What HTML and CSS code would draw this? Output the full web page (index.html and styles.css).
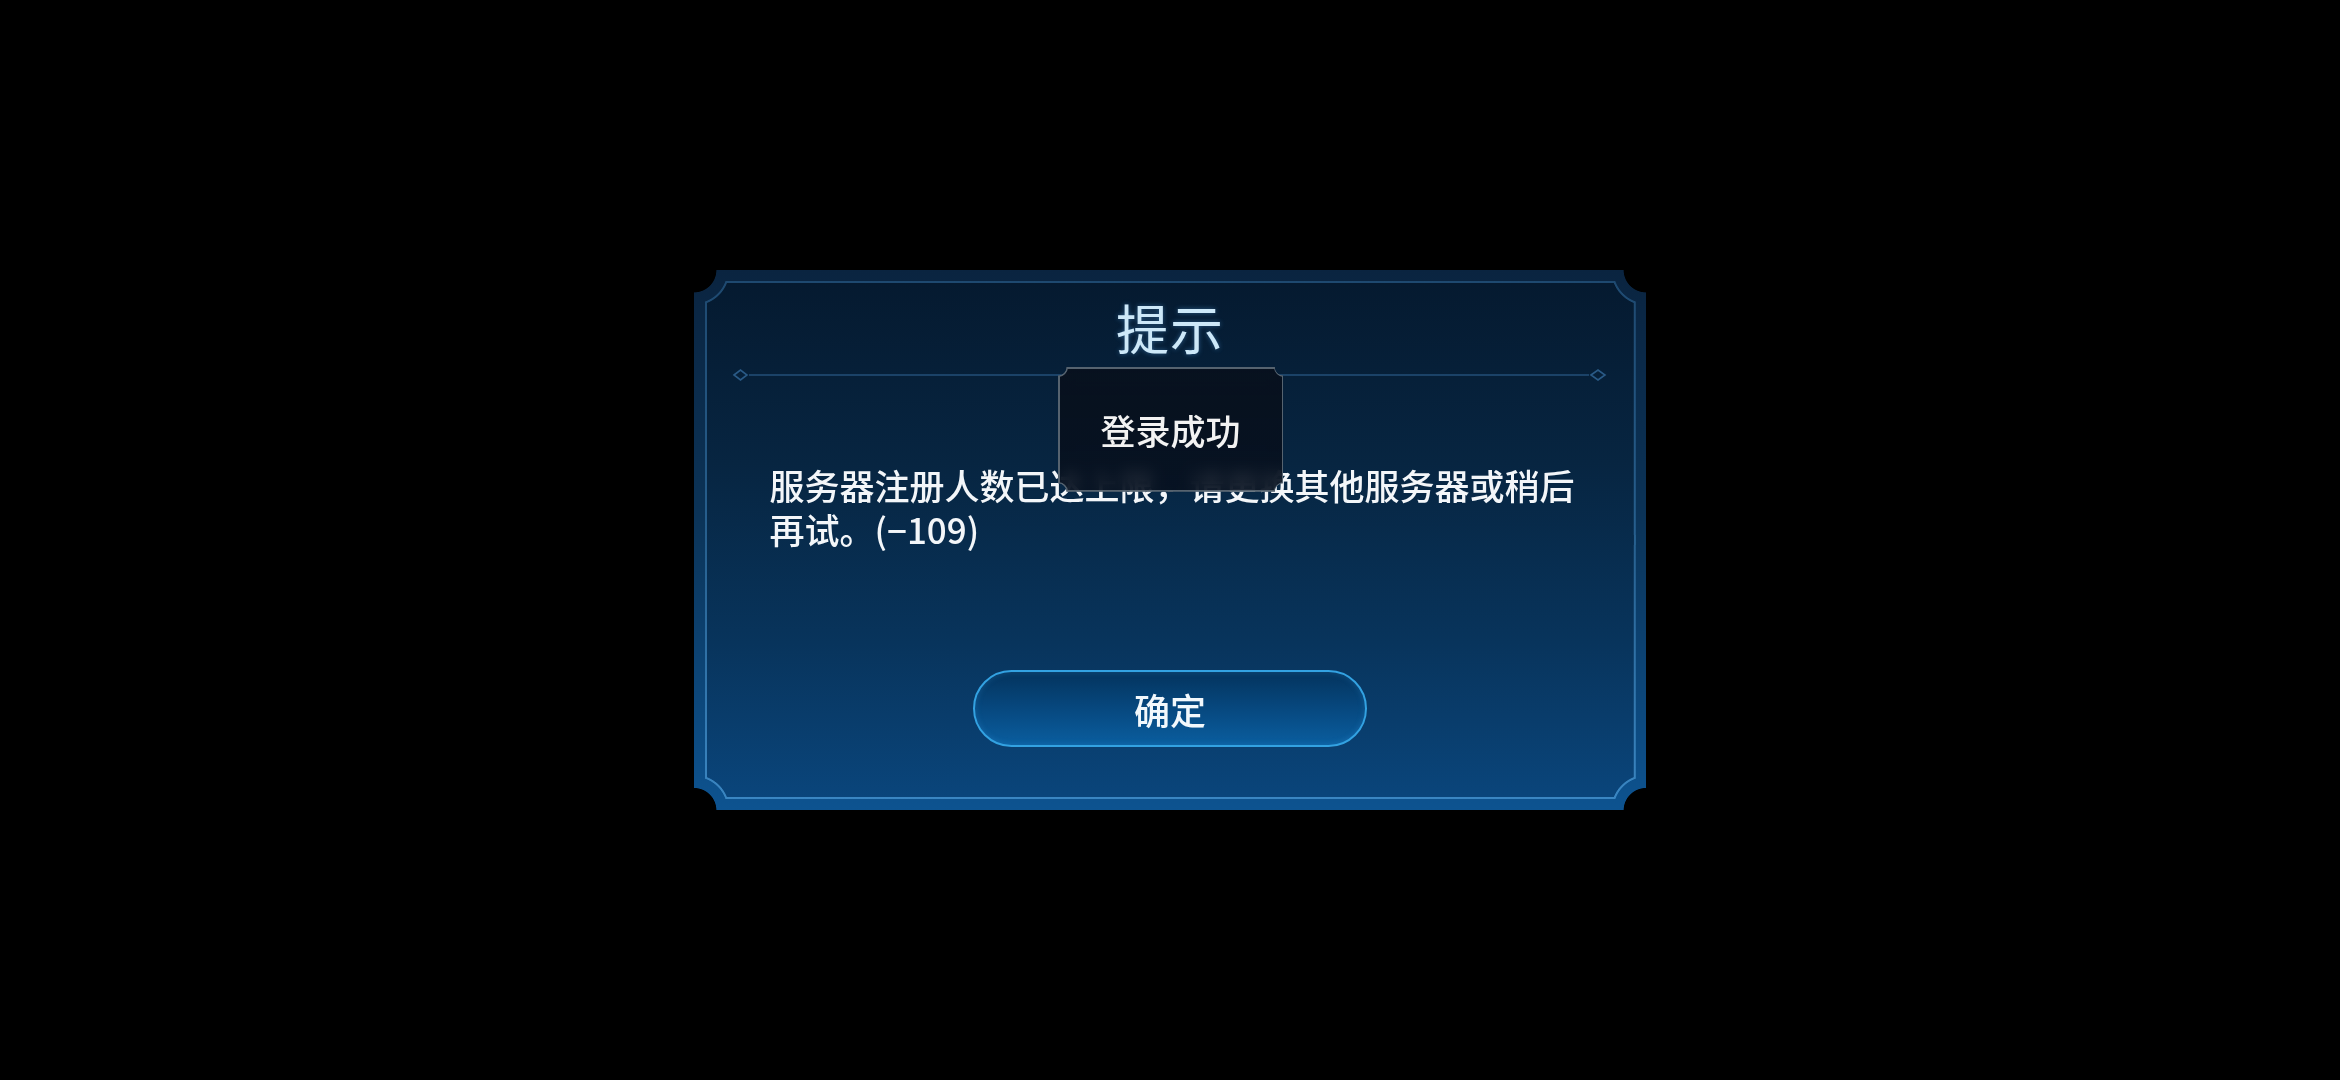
FILE: index.html
```html
<!DOCTYPE html>
<html lang="zh-CN">
<head>
<meta charset="utf-8">
<title>提示</title>
<link rel="stylesheet" href="styles.css">
</head>
<body>
<div class="stage">
  <div class="dialog notched band">
    <div class="frame-line notched">
      <div class="panel notched">
        <div class="title">提示</div>
        <svg class="divider" width="876" height="14" viewBox="0 0 876 14">
          <path d="M2 7 L8.5 2 L15 7 L8.5 12 Z" fill="none" stroke="#2a5a86" stroke-width="1.6"/>
          <line x1="17" y1="7" x2="857" y2="7" stroke="#234f78" stroke-width="1.6"/>
          <path d="M859 7 L866 2 L873 7 L866 12 Z" fill="none" stroke="#2a5a86" stroke-width="1.6"/>
        </svg>
        <p class="message">服务器注册人数已达上限，请更换其他服务器或稍后再试。(−109)</p>
        <button class="confirm" type="button">确定</button>
      </div>
    </div>
    <div class="toast">
      <svg class="toast-edge" width="226" height="125" viewBox="0 0 226 125">
        <path d="M9 1 H217 A9 9 0 0 0 225 9 V116 A9 9 0 0 0 217 124 H9 A9 9 0 0 0 1 116 V9 A9 9 0 0 0 9 1 Z" fill="none" stroke="#56636f" stroke-width="2"/>
      </svg>
      <span class="toast-text">登录成功</span>
    </div>
  </div>
</div>
</body>
</html>
```
FILE: styles.css
```css
* { box-sizing: border-box; }

html, body {
  margin: 0;
  padding: 0;
  background: #000;
}

body {
  font-family: "Noto Sans CJK SC", "Noto Sans", sans-serif;
}

.stage {
  width: 2340px;
  height: 1080px;
  display: flex;
  align-items: center;
  justify-content: center;
}

.notched {
  --o: 0px;
  --r: 22px;
  -webkit-mask:
    radial-gradient(circle at calc(-1 * var(--o)) calc(-1 * var(--o)), transparent var(--r), #000 calc(var(--r) + 0.8px)) top left / 51% 51% no-repeat,
    radial-gradient(circle at calc(100% + var(--o)) calc(-1 * var(--o)), transparent var(--r), #000 calc(var(--r) + 0.8px)) top right / 51% 51% no-repeat,
    radial-gradient(circle at calc(-1 * var(--o)) calc(100% + var(--o)), transparent var(--r), #000 calc(var(--r) + 0.8px)) bottom left / 51% 51% no-repeat,
    radial-gradient(circle at calc(100% + var(--o)) calc(100% + var(--o)), transparent var(--r), #000 calc(var(--r) + 0.8px)) bottom right / 51% 51% no-repeat;
  mask:
    radial-gradient(circle at calc(-1 * var(--o)) calc(-1 * var(--o)), transparent var(--r), #000 calc(var(--r) + 0.8px)) top left / 51% 51% no-repeat,
    radial-gradient(circle at calc(100% + var(--o)) calc(-1 * var(--o)), transparent var(--r), #000 calc(var(--r) + 0.8px)) top right / 51% 51% no-repeat,
    radial-gradient(circle at calc(-1 * var(--o)) calc(100% + var(--o)), transparent var(--r), #000 calc(var(--r) + 0.8px)) bottom left / 51% 51% no-repeat,
    radial-gradient(circle at calc(100% + var(--o)) calc(100% + var(--o)), transparent var(--r), #000 calc(var(--r) + 0.8px)) bottom right / 51% 51% no-repeat;
}

.dialog {
  position: relative;
  width: 953px;
  height: 540px;
  padding: 11px;
  --o: 0px;
  --r: 22px;
  background: linear-gradient(180deg, #0a2440 0%, #0b3357 45%, #0d5390 100%);
}

.frame-line {
  height: 100%;
  padding: 2px;
  --o: 11px;
  --r: 33px;
  background: linear-gradient(180deg, #1e4970 0%, #27608f 50%, #3a86c2 100%);
}

.panel {
  height: 100%;
  --o: 13px;
  --r: 35px;
  background: linear-gradient(180deg, #051a30 0%, #072541 35%, #08345c 70%, #0a457b 100%);
  display: flex;
  flex-direction: column;
  align-items: center;
}

.title {
  margin-top: 14px;
  height: 60px;
  line-height: 60px;
  font-size: 53px;
  font-weight: 400;
  color: #cde8f8;
  text-shadow: 0 0 5px rgba(90, 170, 240, 0.45);
  letter-spacing: 1px;
}

.divider {
  display: block;
  margin-top: 11px;
  flex: none;
}

.message {
  align-self: flex-start;
  margin: 81px 0 0 63px;
  width: 820px;
  font-size: 35px;
  line-height: 44px;
  font-weight: 500;
  color: #f3f6f9;
}

.confirm {
  margin-top: 119px;
  width: 394px;
  height: 77px;
  border-radius: 39px;
  border: 2px solid #33a2e2;
  background: linear-gradient(180deg, #04345e 0%, #074a82 55%, #0a5e9f 100%);
  box-shadow: inset 0 0 6px rgba(60, 160, 230, 0.25);
  color: #f2f8fc;
  font-family: "Noto Sans CJK SC", "Noto Sans", sans-serif;
  font-size: 36px;
  font-weight: 500;
  line-height: 1;
  padding: 0;
}

.toast {
  position: absolute;
  left: 364px;
  top: 97px;
  width: 226px;
  height: 125px;
  display: flex;
  align-items: center;
  justify-content: center;
  background: linear-gradient(180deg, rgba(8, 16, 28, 0.92) 0%, rgba(7, 16, 30, 0.88) 100%);
  -webkit-backdrop-filter: blur(7px);
  backdrop-filter: blur(7px);
  -webkit-mask:
    radial-gradient(circle at 0 0, transparent 8px, #000 8.8px) top left / 51% 51% no-repeat,
    radial-gradient(circle at 100% 0, transparent 8px, #000 8.8px) top right / 51% 51% no-repeat,
    radial-gradient(circle at 0 100%, transparent 8px, #000 8.8px) bottom left / 51% 51% no-repeat,
    radial-gradient(circle at 100% 100%, transparent 8px, #000 8.8px) bottom right / 51% 51% no-repeat;
  mask:
    radial-gradient(circle at 0 0, transparent 8px, #000 8.8px) top left / 51% 51% no-repeat,
    radial-gradient(circle at 100% 0, transparent 8px, #000 8.8px) top right / 51% 51% no-repeat,
    radial-gradient(circle at 0 100%, transparent 8px, #000 8.8px) bottom left / 51% 51% no-repeat,
    radial-gradient(circle at 100% 100%, transparent 8px, #000 8.8px) bottom right / 51% 51% no-repeat;
}

.toast-edge {
  position: absolute;
  left: 0;
  top: 0;
}

.toast-text {
  position: relative;
  font-size: 35px;
  line-height: 44px;
  color: #f2f2f2;
  font-weight: 500;
}
```
